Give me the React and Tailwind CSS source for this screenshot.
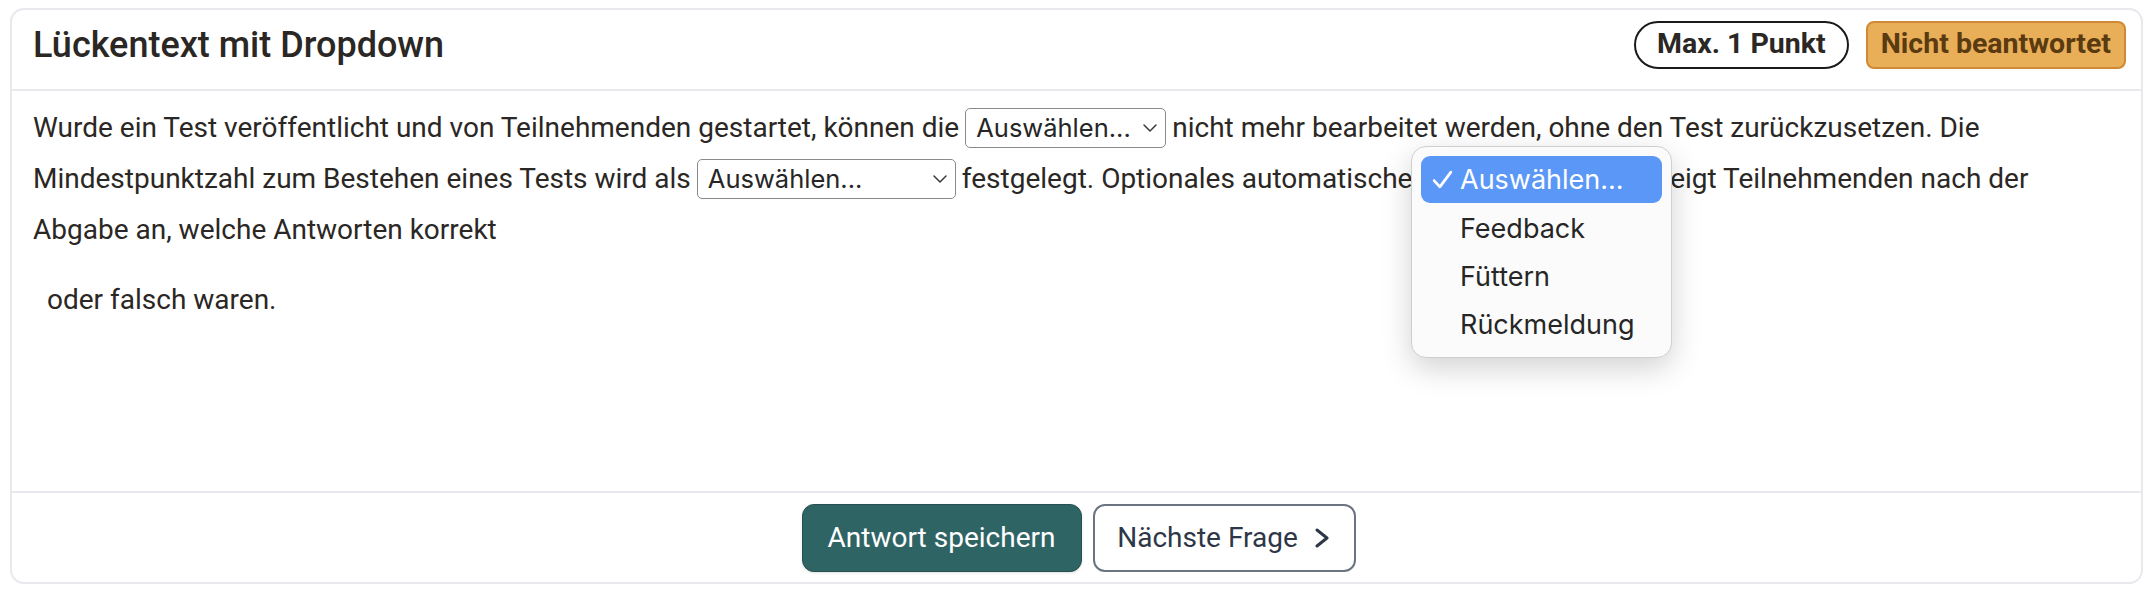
import React from "react";

function Chevron() {
  return (
    <svg width="16" height="10" viewBox="0 0 16 10" className="shrink-0">
      <polyline points="2,2 8,8 14,2" fill="none" stroke="#3a3a3a" strokeWidth="1.5" strokeLinecap="round" strokeLinejoin="round" />
    </svg>
  );
}

function Sel({ w }) {
  return (
    <span
      className={`inline-flex items-baseline align-baseline h-[40px] border-[1.5px] border-[#8a8a8a] rounded-[5px] pl-[10px] pr-[7px] mx-[6px] ${w}`}
      style={{ fontFamily: "Inter, 'Noto Sans', sans-serif" }}
    >
      <span className="text-[25.5px] leading-[37px] text-[#262626]">Auswählen...</span>
      <span className="ml-auto self-center flex"><Chevron /></span>
    </span>
  );
}

export default function App() {
  return (
    <div className="relative w-[2152px] h-[594px] bg-white pt-[8px] pl-[10px]" style={{ fontFamily: "Roboto, 'Liberation Sans', sans-serif" }}>
      <div className="w-[2133px] h-[576px] border-2 border-[#e8e8ed] rounded-[14px] flex flex-col">
        <div className="h-[81px] shrink-0 flex items-center justify-between pl-[21px] pr-[15px] pb-[10px] border-b-2 border-[#e8e8ed]">
          <h1 className="text-[36px] font-medium text-[#2b2724] leading-none">Lückentext mit Dropdown</h1>
          <div className="flex items-center gap-[17px]">
            <span className="h-[48px] px-[21px] flex items-center border-2 border-[#1a1a1a] rounded-full text-[28.5px] font-bold text-[#2b2724]">Max. 1 Punkt</span>
            <span className="h-[48px] px-[13px] flex items-center border-2 border-[#d08a35] bg-[#e9ae58] rounded-[8px] text-[28.5px] font-bold text-[#5a3a10]">Nicht beantwortet</span>
          </div>
        </div>
        <div className="flex-1 pl-[21px] pt-[11px] text-[28px] leading-[51px] text-[#2b2724]">
          <p className="whitespace-nowrap">
            Wurde ein Test veröffentlicht und von Teilnehmenden gestartet, können die<Sel w="w-[201px]" />nicht mehr bearbeitet werden, ohne den Test zurückzusetzen. Die
            <br />
            Mindestpunktzahl zum Bestehen eines Tests wird als<Sel w="w-[259px]" />festgelegt. Optionales automatische<Sel w="w-[232px]" />zeigt Teilnehmenden nach der
            <br />
            Abgabe an, welche Antworten korrekt
          </p>
          <p className="mt-[19px] pl-[14px]">oder falsch waren.</p>
        </div>
        <div className="h-[91px] shrink-0 border-t-2 border-[#e8e8ed] flex items-center justify-center gap-[11px] pl-[4px]">
          <button className="h-[68px] w-[280px] rounded-[12px] bg-[#2f6464] border border-[#264f4f] text-white text-[28px] shadow-sm">Antwort speichern</button>
          <button className="h-[68px] w-[263px] rounded-[12px] border-2 border-[#6b7280] bg-white text-[#2d3748] text-[28px] flex items-center justify-center gap-[15px]">
            <span>Nächste Frage</span>
            <svg width="18" height="20" viewBox="0 0 18 20">
              <polyline points="4,2 14,10 4,18" fill="none" stroke="#2d3748" strokeWidth="3" strokeLinecap="round" strokeLinejoin="round" />
            </svg>
          </button>
        </div>
      </div>

      <div
        className="absolute left-[1411px] top-[146px] w-[261px] h-[212px] rounded-[15px] bg-[#fbfbfb] border border-[#cfcfcf] shadow-[0_10px_30px_rgba(0,0,0,0.18)] p-[9px] flex flex-col gap-[1px]"
        style={{ fontFamily: "Inter, 'Noto Sans', sans-serif" }}
      >
        {[
          { t: "Auswählen...", on: true },
          { t: "Feedback" },
          { t: "Füttern" },
          { t: "Rückmeldung" },
        ].map((it) => (
          <div key={it.t} className={`h-[47px] shrink-0 flex items-center rounded-[9px] text-[27px] ${it.on ? "bg-[#5b97f6] text-white" : "text-[#262626]"}`}>
            <span className="w-[39px] flex justify-center pl-[4px]">
              {it.on && (
                <svg width="21" height="19" viewBox="0 0 20 18">
                  <polyline points="2,10 7.5,16 18,2" fill="none" stroke="white" strokeWidth="2.6" strokeLinecap="round" strokeLinejoin="round" />
                </svg>
              )}
            </span>
            <span className={it.on ? "pt-[1px]" : "pt-[4px]"}>{it.t}</span>
          </div>
        ))}
      </div>
    </div>
  );
}
